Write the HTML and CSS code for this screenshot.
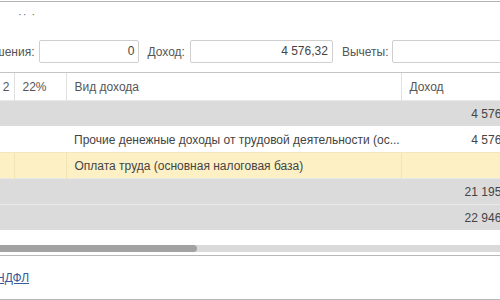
FILE: index.html
```
<!DOCTYPE html>
<html lang="ru">
<head>
    <meta charset="UTF-8">
    <title>НДФЛ</title>
    <link rel="stylesheet" href="styles.css">
</head>
<body>

<div class="page">
    <div class="top-line"></div>
    <div class="dots">·· ·</div>

    <div class="fields">
        <span class="label first">шения:</span>
        <div class="field small">0</div>
        <span class="label">Доход:</span>
        <div class="field medium">4 576,32</div>
        <span class="label last">Вычеты:</span>
        <div class="field wide"></div>
    </div>

    <table class="grid">
        <colgroup>
            <col class="c-num">
            <col class="c-rate">
            <col class="c-kind">
            <col class="c-sum">
        </colgroup>
        <thead>
            <tr>
                <th class="right">2</th>
                <th>22%</th>
                <th>Вид дохода</th>
                <th>Доход</th>
            </tr>
        </thead>
        <tbody>
            <tr class="group">
                <td></td><td></td><td></td>
                <td class="right">4 576,32</td>
            </tr>
            <tr class="plain">
                <td></td><td></td>
                <td>Прочие денежные доходы от трудовой деятельности (ос...</td>
                <td class="right">4 576,32</td>
            </tr>
            <tr class="current">
                <td></td><td></td>
                <td>Оплата труда (основная налоговая база)</td>
                <td class="right"></td>
            </tr>
            <tr class="group">
                <td></td><td></td><td></td>
                <td class="right">21 195,32</td>
            </tr>
            <tr class="group">
                <td></td><td></td><td></td>
                <td class="right">22 946,32</td>
            </tr>
        </tbody>
    </table>

    <div class="scrollbar"><div class="thumb"></div></div>

    <div class="footer">
        <a href="#" class="link">НДФЛ</a>
    </div>
</div>

</body>
</html>
```

FILE: styles.css
```
body {
    margin: 0;
    font-family: "Liberation Sans", Arial, sans-serif;
    font-size: 12px;
    color: #4d4d4d;
    background-color: #ffffff;
}

.page {
    width: 500px;
    height: 300px;
    overflow: hidden;
}

.top-line {
    height: 1px;
    margin-top: 1px;
    background-color: #b3b3b3;
}

.dots {
    height: 38px;
    padding-left: 18px;
    box-sizing: border-box;
    font-size: 11px;
    line-height: 24px;
    color: #666;
    letter-spacing: 1px;
}

.fields {
    display: flex;
    align-items: center;
    height: 23px;
    white-space: nowrap;
}

.label {
    margin-left: 8px;
    margin-right: 5px;
    color: #555;
}

.label.first {
    margin-left: -5px;
}

.label.last {
    margin-left: 9px;
    margin-right: 3px;
}

.field {
    flex: none;
    height: 23px;
    box-sizing: border-box;
    border: 1px solid #cfcfcf;
    border-radius: 2px;
    padding-right: 4px;
    line-height: 21px;
    text-align: right;
    color: #444;
}

.small {
    width: 100px;
}

.medium {
    width: 143px;
}

.wide {
    width: 140px;
}

.grid {
    margin-top: 9px;
    width: 526px;
    border-collapse: collapse;
    table-layout: fixed;
}

.c-num { width: 14px; }
.c-rate { width: 52px; }
.c-kind { width: 335px; }
.c-sum { width: 125px; }

.grid th {
    height: 27px;
    padding: 0 8px;
    border-top: 1px solid #c4c4c4;
    border-left: 1px solid #e0e0e0;
    font-weight: normal;
    text-align: left;
    color: #555;
    white-space: nowrap;
    overflow: hidden;
}

.grid th:first-child {
    border-left: none;
    padding: 0 4px 0 0;
}

.grid td {
    height: 25px;
    padding: 0 8px;
    border-top: 1px solid transparent;
    white-space: nowrap;
    overflow: hidden;
    color: #444;
}

.grid .right {
    text-align: right;
}

.group td {
    background-color: #dbdbdb;
    border-top-color: #e9e9e9;
}

.plain td {
    background-color: #ffffff;
    border-top-color: #ffffff;
}

.current td {
    background-color: #fcf0c4;
    border-top-color: #f0e6c0;
    border-left: 1px solid #f0e3b4;
}

.current td:first-child {
    border-left: none;
}

.scrollbar {
    margin-top: 15px;
    height: 7px;
    background-color: #dadada;
}

.thumb {
    width: 197px;
    height: 7px;
    background-color: #a2a2a2;
    border-radius: 0 4px 4px 0;
}

.footer {
    margin-top: 3px;
    height: 43px;
    border-top: 1px solid #b8b8b8;
    border-bottom: 1px solid #b8b8b8;
    display: flex;
    align-items: center;
}

.link {
    margin-left: -4px;
    color: #3b5a9a;
    text-decoration: underline;
}
```
